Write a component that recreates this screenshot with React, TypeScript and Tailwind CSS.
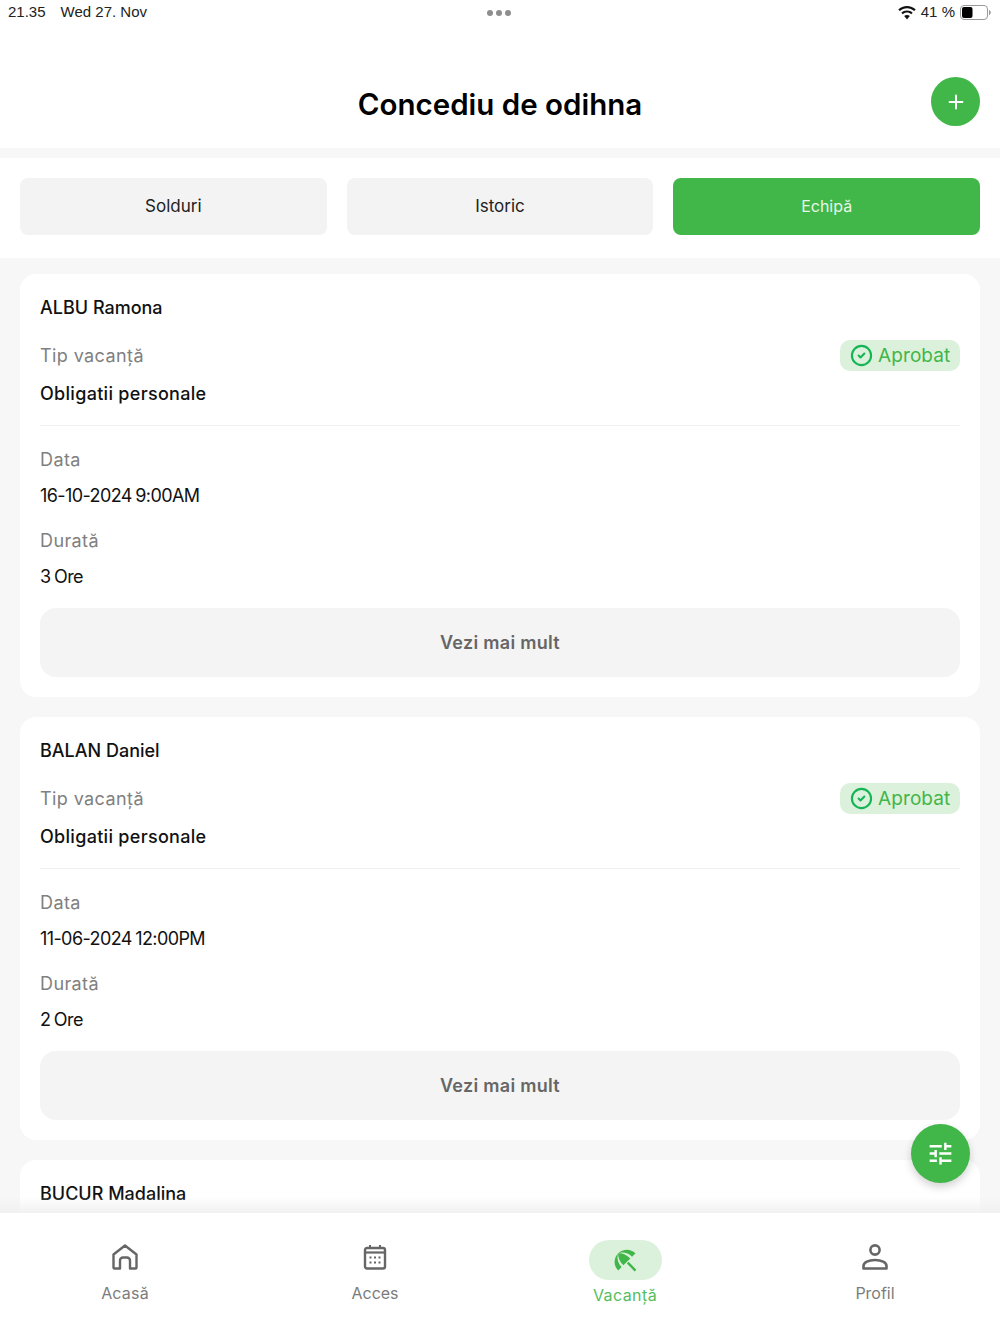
import { CircleCheck, Plus } from 'lucide-react'

const requests = [
  { name: 'ALBU Ramona', date: '16-10-2024 9:00AM', hours: 3 },
  { name: 'BALAN Daniel', date: '11-06-2024 12:00PM', hours: 2 },
]

const Field = ({ label, value }: { label: string; value: string }) => (
  <div>
    <p className="h-[24px] text-[18px] leading-[24px] tracking-[0.4px] text-[#808080]">{label}</p>
    <p className="mt-3 h-[24px] text-[18px] leading-[24px] tracking-[-0.6px] [word-spacing:-1px] text-[#111]">{value}</p>
  </div>
)

const RequestCard = ({ name, date, hours }: { name: string; date: string; hours: number }) => (
  <div className="rounded-2xl bg-white p-5">
    <h3 className="h-[28px] text-[18px] font-medium leading-[28px] text-[#111]">{name}</h3>
    <div className="mt-[17px] flex h-[32px] items-center justify-between">
      <p className="text-[18px] tracking-[0.4px] text-[#808080]">Tip vacanță</p>
      <span className="flex h-[31px] w-[120px] items-center gap-[5px] rounded-[10px] bg-[#dcf1dc] pl-[10px] text-[19px] tracking-[0.1px] text-[#41b649]">
        <CircleCheck size={23} strokeWidth={2.2} className="text-[#14b556]" />
        <span className="mt-[2px]">Aprobat</span>
      </span>
    </div>
    <p className="mt-[11px] h-[24px] text-[18px] font-medium leading-[24px] tracking-[0.3px] text-[#111]">
      Obligatii personale
    </p>
    <div className="mt-[19px] border-t border-[#f0f0f0]" />
    <div className="mt-[22px] flex flex-col gap-[21px]">
      <Field label="Data" value={date} />
      <Field label="Durată" value={`${hours} Ore`} />
    </div>
    <button className="mt-[19px] h-[69px] w-full rounded-2xl bg-[#f4f4f4] text-[18px] font-semibold tracking-[0.3px] text-[#666]">
      Vezi mai mult
    </button>
  </div>
)

const HomeIcon = () => (
  <svg width="26" height="26" viewBox="0 0 26 26" fill="none" stroke="#666" strokeWidth="2.4" strokeLinejoin="round">
    <path d="M1.5 10.5 13 1.5l11.5 9v13a1 1 0 0 1-1 1H18v-8a3 3 0 0 0-3-3h-4a3 3 0 0 0-3 3v8H2.5a1 1 0 0 1-1-1z" />
  </svg>
)

const CalendarIcon = () => (
  <svg width="24" height="26" viewBox="0 0 24 26" fill="none" stroke="#666">
    <rect x="2" y="4" width="20" height="20.5" rx="2" strokeWidth="2.4" />
    <path d="M2 8.5h20" strokeWidth="2.2" />
    <path d="M7 1v3M17 1v3" strokeWidth="2" />
    <g fill="#666" stroke="none">
      <rect x="6.5" y="12.5" width="2" height="2" />
      <rect x="11" y="12.5" width="2" height="2" />
      <rect x="15.5" y="12.5" width="2" height="2" />
      <rect x="6.5" y="17.5" width="2" height="2" />
      <rect x="11" y="17.5" width="2" height="2" />
      <rect x="15.5" y="17.5" width="2" height="2" />
    </g>
  </svg>
)

const UmbrellaIcon = () => (
  <svg width="29" height="29" viewBox="0 0 24 24" fill="#41b649">
    <path d="M13.127 14.56l1.43-1.43 6.44 6.443L19.57 21zm4.293-5.73l2.86-2.86c-3.95-3.95-10.35-3.96-14.3-.02 3.93-1.3 8.31-.25 11.44 2.88zM5.95 5.98c-3.94 3.95-3.93 10.35.02 14.3l2.86-2.86C5.7 14.29 4.65 9.91 5.95 5.98zm.02-.02l-.01.01c-.38 3.01 1.17 6.88 4.3 10.02l5.73-5.73c-3.13-3.13-7.01-4.68-10.02-4.3z" />
  </svg>
)

const PersonIcon = () => (
  <svg width="26" height="26" viewBox="0 0 26 26" fill="none" stroke="#666" strokeWidth="2.6">
    <circle cx="13" cy="6" r="4.6" />
    <path d="M1.5 24.5v-2.5c0-3.6 5-6 11.5-6s11.5 2.4 11.5 6v2.5z" strokeLinejoin="round" />
  </svg>
)

export default function App() {
  return (
    <div className="relative flex h-[1333px] flex-col overflow-hidden bg-white font-['Inter',sans-serif]">
      {/* status bar */}
      <div className="grid h-[25px] grid-cols-3 items-center pl-2 pr-[9px] text-[15px] text-[#222] font-['Liberation_Sans',sans-serif]">
        <div className="flex gap-[15px]">
          <span>21.35</span>
          <span>Wed 27. Nov</span>
        </div>
        <div className="flex justify-center gap-[3px]">
          <span className="size-[6px] rounded-full bg-[#8e8e8e]" />
          <span className="size-[6px] rounded-full bg-[#8e8e8e]" />
          <span className="size-[6px] rounded-full bg-[#8e8e8e]" />
        </div>
        <div className="flex items-center justify-end gap-[5px]">
          <svg width="18" height="14" viewBox="0 0 18 14" fill="#111">
            <path d="M9 0C5.6 0 2.6 1.3.3 3.5l1.5 1.6C3.7 3.3 6.2 2.2 9 2.2s5.3 1.1 7.2 2.9l1.5-1.6C15.4 1.3 12.4 0 9 0z" />
            <path d="M9 4.4c-2.2 0-4.2.9-5.7 2.3l1.5 1.6C5.9 7.3 7.4 6.6 9 6.6s3.1.7 4.2 1.7l1.5-1.6C13.2 5.3 11.2 4.4 9 4.4z" />
            <path d="M9 8.9c-1.1 0-2.1.4-2.8 1.1L9 13.5l2.8-3.5C11.1 9.3 10.1 8.9 9 8.9z" />
          </svg>
          <span>41 %</span>
          <svg width="31" height="15" viewBox="0 0 31 15" fill="none">
            <rect x="0.5" y="0.5" width="27" height="14" rx="3.5" stroke="#999" />
            <rect x="2" y="2" width="10.5" height="11" rx="2" fill="#000" />
            <path d="M29.5 5.5c1 .4 1 3.6 0 4z" fill="#999" stroke="#999" />
          </svg>
        </div>
      </div>

      {/* title */}
      <header className="grid h-[123px] grid-cols-[1fr_auto_1fr]">
        <div />
        <h1 className="mt-[59px] text-[29.5px] font-semibold leading-[40px] text-black">Concediu de odihna</h1>
        <button className="mr-5 mt-[52px] flex size-[49px] items-center justify-center justify-self-end rounded-full bg-[#41b649] text-white">
          <Plus size={22} strokeWidth={2.2} />
        </button>
      </header>
      <div className="h-[10px] bg-[#f7f7f7]" />

      {/* tabs */}
      <div className="grid h-[100px] grid-cols-3 items-start gap-5 px-5 pt-5">
        <button className="h-[57px] rounded-lg bg-[#f3f3f3] text-[17px] text-[#222]">Solduri</button>
        <button className="h-[57px] rounded-lg bg-[#f3f3f3] text-[17px] text-[#222]">Istoric</button>
        <button className="h-[57px] rounded-lg bg-[#41b649] pb-[2px] text-[16px] text-[#e6f6e7]">Echipă</button>
      </div>

      {/* list */}
      <main className="flex min-h-0 flex-1 flex-col gap-5 overflow-hidden bg-[#f7f7f7] px-5 pt-4">
        {requests.map((r) => (
          <RequestCard key={r.name} {...r} />
        ))}
        <div className="rounded-2xl bg-white p-5">
          <h3 className="h-[28px] text-[18px] font-medium leading-[28px] text-[#111]">BUCUR Madalina</h3>
        </div>
      </main>

      {/* bottom nav */}
      <nav className="relative grid h-[120px] grid-cols-4 bg-white">
        <div className="pointer-events-none absolute inset-x-0 -top-[16px] h-[16px] bg-gradient-to-b from-transparent to-[#f1f1f1]" />
        <button className="flex flex-col items-center pt-[31px] text-[16px] tracking-[0.2px] text-[#7c7c7c]">
          <HomeIcon />
          <span className="mt-[11px] leading-[24px]">Acasă</span>
        </button>
        <button className="flex flex-col items-center pt-[31px] text-[16px] text-[#7c7c7c]">
          <CalendarIcon />
          <span className="mt-[11px] leading-[24px]">Acces</span>
        </button>
        <button className="flex flex-col items-center pt-[27px] text-[16px] tracking-[0.4px] text-[#55bd5e]">
          <span className="flex h-[40px] w-[73px] items-center justify-center rounded-full bg-[#dcf1dc]">
            <UmbrellaIcon />
          </span>
          <span className="mt-[3px] leading-[24px]">Vacanță</span>
        </button>
        <button className="flex flex-col items-center pt-[31px] text-[16px] text-[#7c7c7c]">
          <PersonIcon />
          <span className="mt-[11px] leading-[24px]">Profil</span>
        </button>
      </nav>

      {/* filter */}
      <button className="absolute left-[911px] top-[1124px] flex size-[59px] items-center justify-center rounded-full bg-[#41b649] shadow-[0_4px_8px_rgba(0,0,0,0.18)]">
        <svg width="29" height="29" viewBox="0 0 24 24" fill="#fff">
          <path d="M3 17v2h6v-2H3zM3 5v2h10V5H3zm10 16v-2h8v-2h-8v-2h-2v6h2zM7 9v2H3v2h4v2h2V9H7zm14 4v-2H11v2h10zm-6-4h2V7h4V5h-4V3h-2v6z" />
        </svg>
      </button>
    </div>
  )
}
